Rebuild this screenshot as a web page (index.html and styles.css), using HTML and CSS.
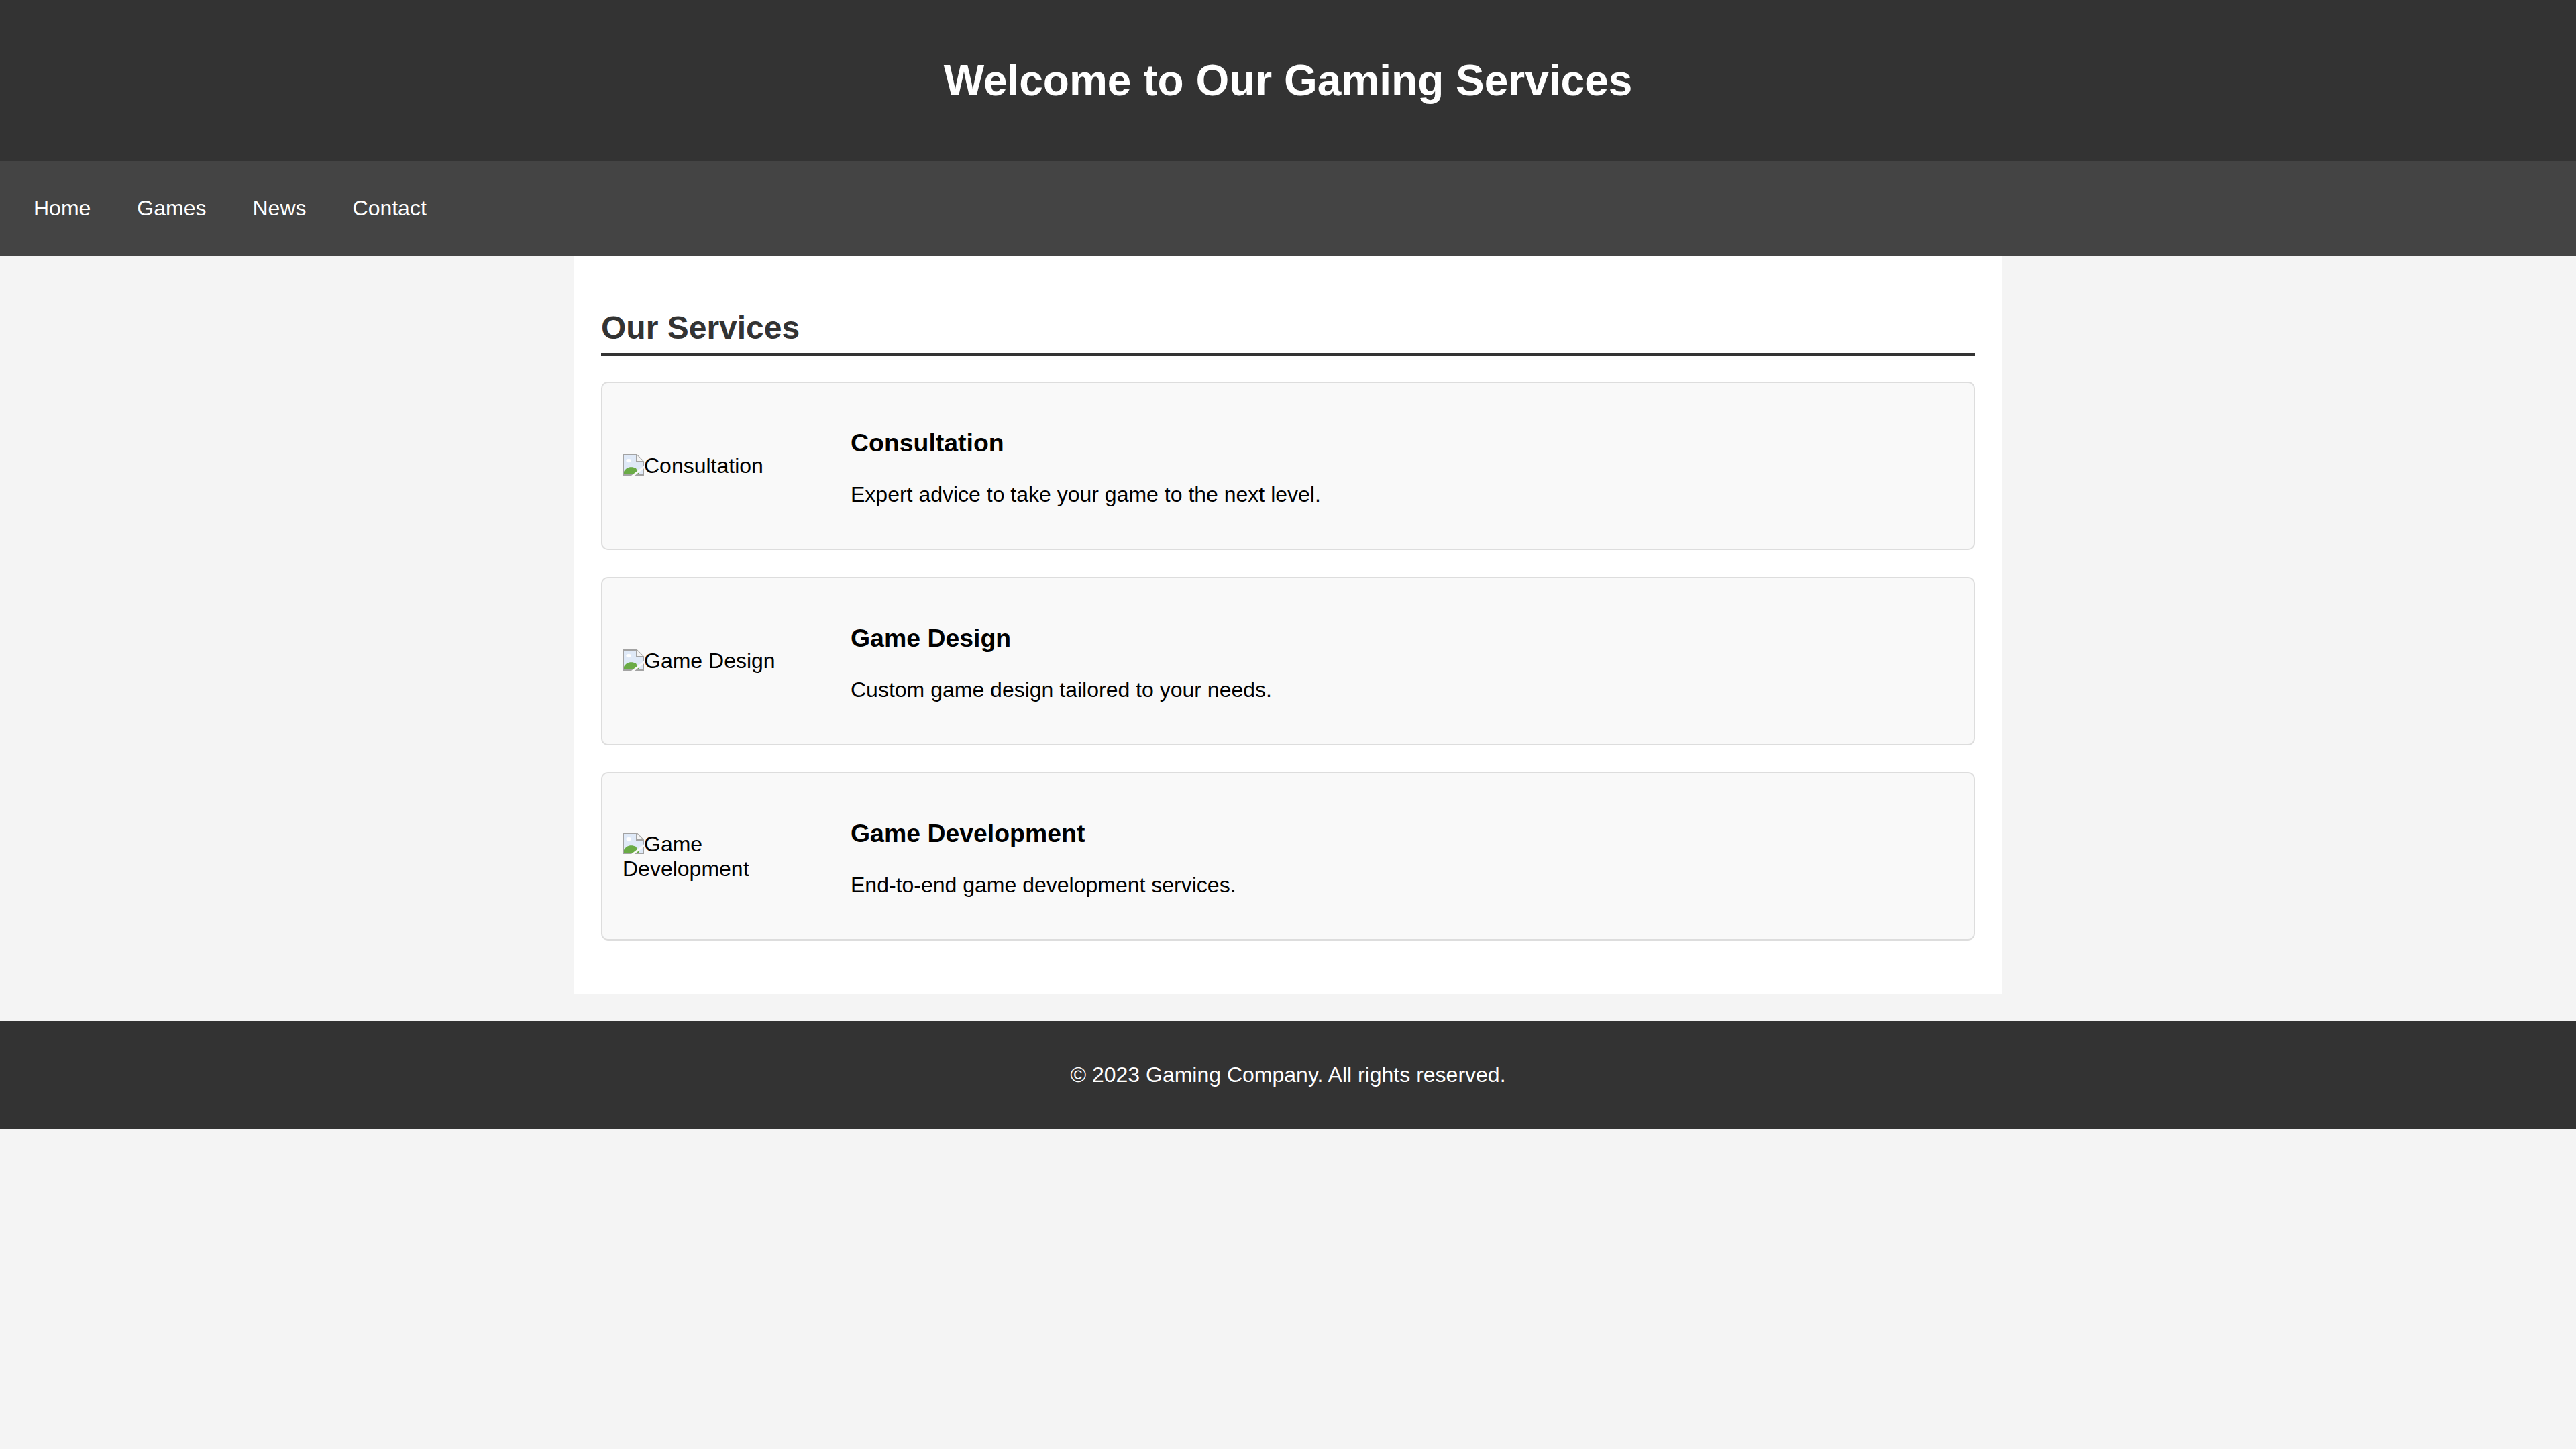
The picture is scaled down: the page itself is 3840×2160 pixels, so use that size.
FILE: index.html
```html
<!DOCTYPE html>
<html lang="en">
<head>
<meta charset="utf-8">
<title>Gaming Services</title>
<link rel="stylesheet" href="styles.css">
</head>
<body>
<header class="site-header">
  <h1 class="site-title">Welcome to Our Gaming Services</h1>
</header>
<nav class="site-nav">
  <ul class="nav-list">
    <li><a class="nav-link" href="#">Home</a></li>
    <li><a class="nav-link" href="#">Games</a></li>
    <li><a class="nav-link" href="#">News</a></li>
    <li><a class="nav-link" href="#">Contact</a></li>
  </ul>
</nav>
<main class="container">
  <section class="services">
    <h2 class="section-title">Our Services</h2>

    <div class="service">
      <span class="service-img"><svg class="broken" viewBox="0 0 16 16" width="32" height="32"><path d="M0.5 0.5H10.5L15.5 5.5V15.5H0.5Z" fill="#dfe9f7" stroke="#a3a3a3"/><path d="M10.5 0.5V5.5H15.5" fill="#f4f4f4" stroke="#a3a3a3"/><ellipse cx="4.6" cy="4.8" rx="1.9" ry="1.3" fill="#fff"/><path d="M1 15V13C2.5 10 6 8.5 10 10.5L12.5 15Z" fill="#6aab46"/><path d="M6.5 16L16 8.6V10.6L9 16Z" fill="#f9f9f9"/></svg>Consultation</span>
      <div class="service-body">
        <h3 class="service-title">Consultation</h3>
        <p class="service-desc">Expert advice to take your game to the next level.</p>
      </div>
    </div>

    <div class="service">
      <span class="service-img"><svg class="broken" viewBox="0 0 16 16" width="32" height="32"><path d="M0.5 0.5H10.5L15.5 5.5V15.5H0.5Z" fill="#dfe9f7" stroke="#a3a3a3"/><path d="M10.5 0.5V5.5H15.5" fill="#f4f4f4" stroke="#a3a3a3"/><ellipse cx="4.6" cy="4.8" rx="1.9" ry="1.3" fill="#fff"/><path d="M1 15V13C2.5 10 6 8.5 10 10.5L12.5 15Z" fill="#6aab46"/><path d="M6.5 16L16 8.6V10.6L9 16Z" fill="#f9f9f9"/></svg>Game Design</span>
      <div class="service-body">
        <h3 class="service-title">Game Design</h3>
        <p class="service-desc">Custom game design tailored to your needs.</p>
      </div>
    </div>

    <div class="service">
      <span class="service-img"><svg class="broken" viewBox="0 0 16 16" width="32" height="32"><path d="M0.5 0.5H10.5L15.5 5.5V15.5H0.5Z" fill="#dfe9f7" stroke="#a3a3a3"/><path d="M10.5 0.5V5.5H15.5" fill="#f4f4f4" stroke="#a3a3a3"/><ellipse cx="4.6" cy="4.8" rx="1.9" ry="1.3" fill="#fff"/><path d="M1 15V13C2.5 10 6 8.5 10 10.5L12.5 15Z" fill="#6aab46"/><path d="M6.5 16L16 8.6V10.6L9 16Z" fill="#f9f9f9"/></svg>Game Development</span>
      <div class="service-body">
        <h3 class="service-title">Game Development</h3>
        <p class="service-desc">End-to-end game development services.</p>
      </div>
    </div>
  </section>
</main>
<footer class="site-footer">
  <p class="footer-text">&copy; 2023 Gaming Company. All rights reserved.</p>
</footer>
</body>
</html>
```

FILE: styles.css
```css
html, body {
  margin: 0;
  padding: 0;
}

body {
  background: #f4f4f4;
  color: #000;
  font-family: "Liberation Sans", Arial, Helvetica, sans-serif;
  font-size: 32px;
}

.site-header {
  background: #333;
  color: #fff;
  padding: 40px;
  text-align: center;
}

.site-title {
  margin: 42.88px 0;
  font-size: 64px;
  font-weight: bold;
}

.site-nav {
  background: #444;
  padding: 32px 20px;
}

.nav-list {
  list-style: none;
  margin: 0;
  padding: 0;
  display: flex;
  gap: 9px;
}

.nav-link {
  display: block;
  padding: 20px 30px;
  color: #fff;
  text-decoration: none;
}

.container {
  max-width: 2048px;
  margin: 0 auto 40px;
  padding: 40px;
  background: #fff;
}

.section-title {
  margin: 39.84px 0;
  padding-bottom: 10px;
  border-bottom: 4px solid #333;
  color: #333;
  font-size: 48px;
  font-weight: bold;
}

.service {
  display: flex;
  align-items: center;
  margin-bottom: 40px;
  padding: 30px;
  background: #f9f9f9;
  border: 2px solid #ddd;
  border-radius: 10px;
}

.service-img {
  flex: 0 0 300px;
  width: 300px;
  margin-right: 40px;
}

.broken {
  vertical-align: -4px;
}

.service-body {
  flex: 1;
}

.service-title {
  margin: 37.44px 0;
  font-size: 37.44px;
  font-weight: bold;
}

.service-desc {
  margin: 32px 0;
}

.site-footer {
  background: #333;
  color: #fff;
  text-align: center;
  padding: 30px;
}

.footer-text {
  margin: 32px 0;
}
```
